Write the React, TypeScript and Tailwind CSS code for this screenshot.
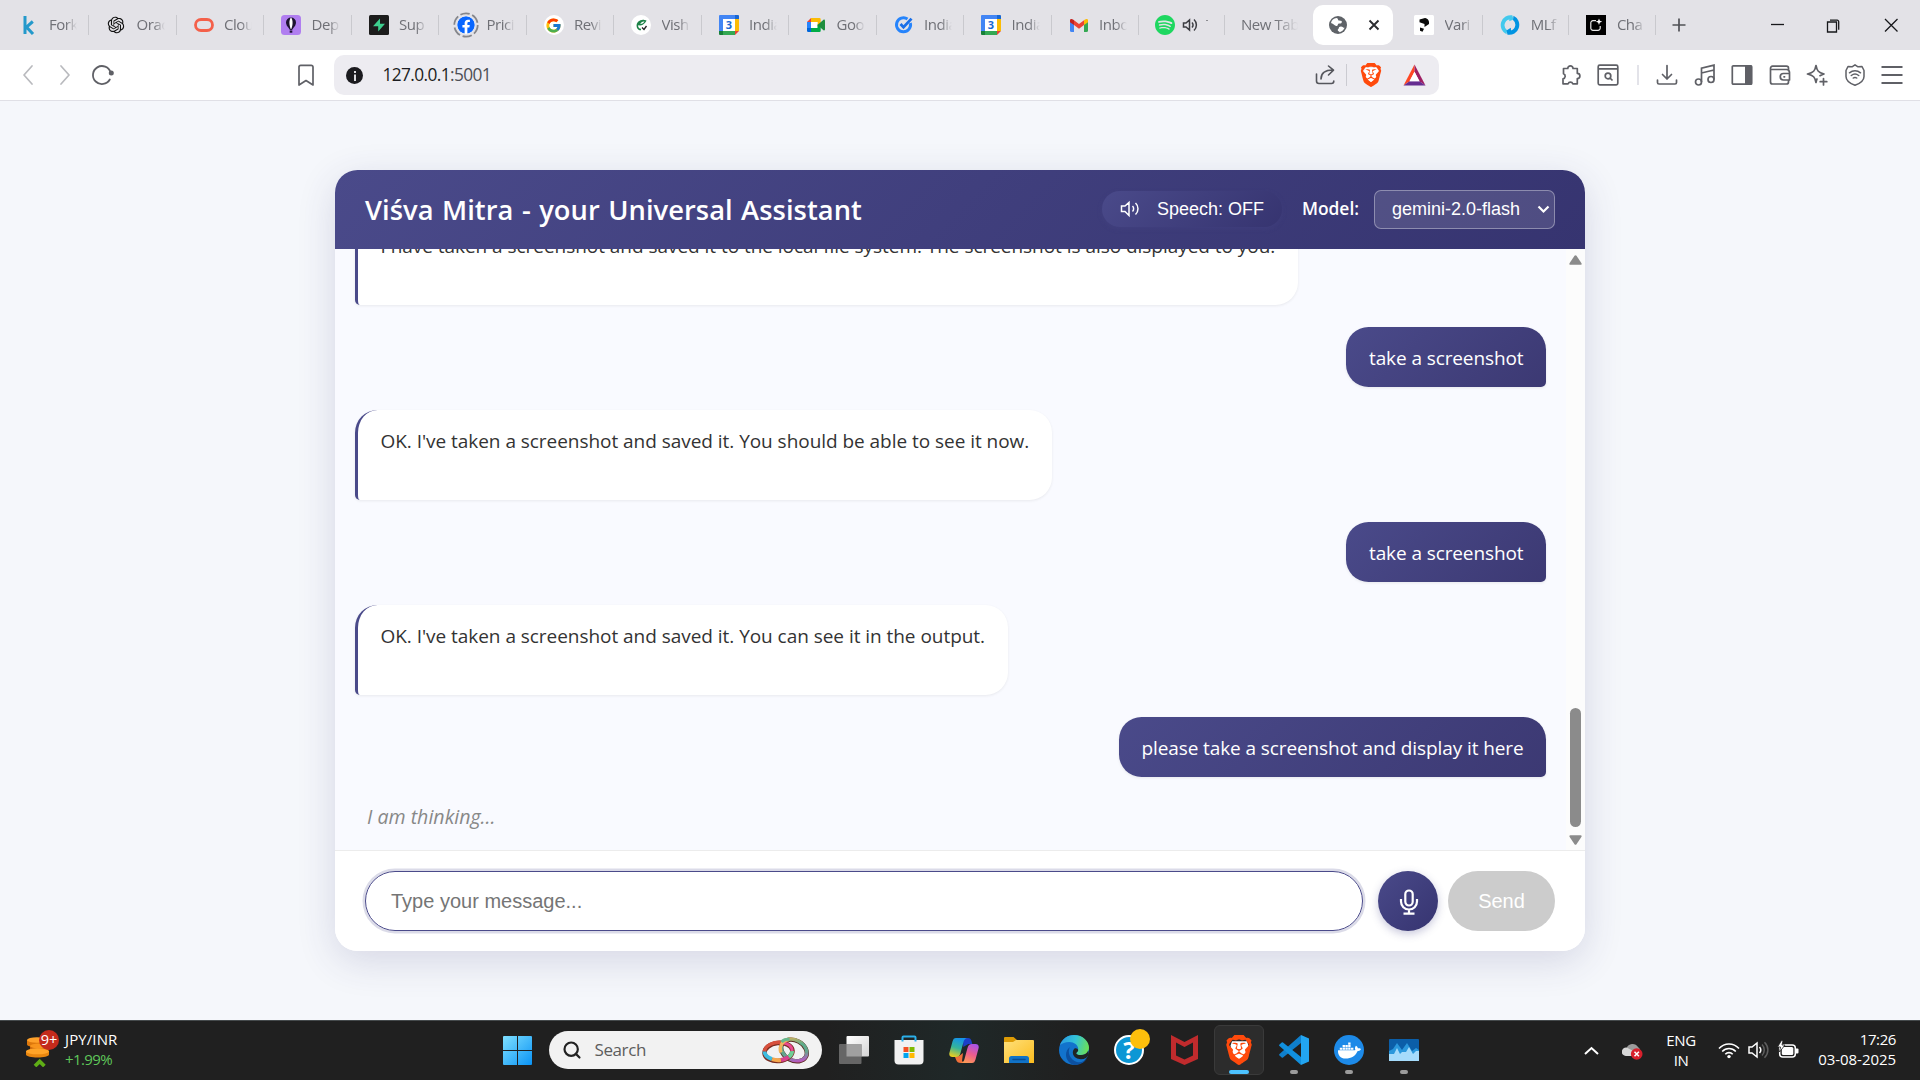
import React from 'react';
import { Search } from 'lucide-react';
import { SiBrave, SiSpotify } from 'react-icons/si';
import { FaDocker, FaFacebook } from 'react-icons/fa';
import { FcGoogle } from 'react-icons/fc';
import { RiOpenaiFill } from 'react-icons/ri';

/* ---------- tab icons ---------- */
const CalendarIcon = () => (
  <svg width="20" height="20" viewBox="0 0 20 20">
    <path d="M1 0h15v4H4v12H0V1a1 1 0 0 1 1-1z" fill="#4285f4" />
    <path d="M16 0h3a1 1 0 0 1 1 1v3h-4z" fill="#1967d2" />
    <path d="M16 4h4v12h-4z" fill="#fbbc04" />
    <path d="M4 16h12v4H4z" fill="#34a853" />
    <path d="M0 16h4v4H1a1 1 0 0 1-1-1z" fill="#188038" />
    <path d="M16 16h4l-4 4z" fill="#ea4335" />
    <path d="M4 4h12v12H4z" fill="#fff" />
    <text x="10" y="14" textAnchor="middle" fontSize="11" fontWeight="700" fill="#1967d2" fontFamily="Open Sans">3</text>
  </svg>
);
const MeetIcon = () => (
  <svg width="20" height="20" viewBox="0 0 20 20">
    <path d="M5 3h8.500a1.200 1.200 0 0 1 1.200 1.200V9l-3.200 2V7H5z" fill="#fbbc04" />
    <path d="M1 7l4-4v4z" fill="#ea4335" />
    <path d="M1 7h4v6H1z" fill="#2684fc" />
    <path d="M1 13h4v4H2.200A1.200 1.200 0 0 1 1 15.800z" fill="#0066da" />
    <path d="M5 7h6.500v6H5z" fill="#fff" />
    <path d="M5 13h6.500V9.500l3.200 1v5.300a1.200 1.200 0 0 1-1.200 1.200H5z" fill="#00ac47" />
    <path d="M11.500 10l6-5.200c.700-.500 1.500-.200 1.500.600v9.200c0 .800-.800 1.100-1.500.600z" fill="#1e8e3e" />
  </svg>
);
const GmailIcon = () => (
  <svg width="20" height="20" viewBox="0 0 20 20">
    <path d="M1 6v9.500A1.500 1.500 0 0 0 2.500 17H5V9z" fill="#4285f4" />
    <path d="M19 6v9.500a1.500 1.500 0 0 1-1.500 1.500H15V9z" fill="#34a853" />
    <path d="M1 5.200v2L5 10V5.300l-1-.8C2.700 3.500 1 4 1 5.200z" fill="#c5221f" />
    <path d="M19 5.200v2L15 10V5.300l1-.8c1.300-1 3-.5 3 .7z" fill="#fbbc04" />
    <path d="M5 5.300l5 3.800 5-3.800V10l-5 3.800L5 10z" fill="#ea4335" />
  </svg>
);
const TasksIcon = () => (
  <svg width="20" height="20" viewBox="0 0 20 20" fill="none" stroke="#2684fc" strokeWidth="3">
    <path d="M13.500 4A7 7 0 1 0 16.300 8" />
    <path d="M6.500 9l3 3.200 8-8.600" stroke="#1a6fe8" strokeWidth="2.800" />
  </svg>
);
const GlobeIcon = () => (
  <svg width="20" height="20" viewBox="0 0 20 20">
    <circle cx="10" cy="10" r="9" fill="#5f6368" />
    <path d="M8.500 3c2 .2 1 2.300 2.500 2.600 1 .3 2-.2 2.700.6.600.8-.2 2-1.200 2.200-1 .1-1.700-.2-2.400.6-.6.900-.2 1.600-1.300 2-1.200.3-2.500-1.300-4.100-2.300L3 8C3.500 5.300 5.700 3.200 8.500 3z" fill="#fff" />
    <path d="M11 12.200c1-.9 3.200-.8 4 .1.500.7 1.200.7 1.700.2-.700 2-2.700 4.200-5.200 4.700-.2-1-1.800-.9-1.800-2.100 0-1 1.300-1 1.300-2.900z" fill="#fff" />
  </svg>
);
const BraveLion = ({ size }: { size: number }) => (
  <span className="grid place-items-center">
    <svg className="col-start-1 row-start-1" width={size * 0.7} height={size * 0.82} viewBox="0 0 14 16">
      <path d="M2 2h10l1 3-2 7-4 3-4-3-2-7z" fill="#fff" />
    </svg>
    <SiBrave className="relative col-start-1 row-start-1 text-[#ff4a0c]" size={size} />
  </span>
);

type Tab = { text: string; icon: React.ReactNode };
const tabs: Tab[] = [
  { text: 'Fork', icon: <svg width="20" height="20" viewBox="0 0 20 20" fill="none" stroke="#2499cb" strokeWidth="3"><path d="M6 1v18M13.800 6.500L7.500 12l6.500 7" /></svg> },
  { text: 'Orac', icon: <RiOpenaiFill size={20} color="#111" /> },
  { text: 'Clou', icon: <svg width="20" height="20" viewBox="0 0 20 20" fill="none"><rect x="1.500" y="4.500" width="17" height="11" rx="5.500" stroke="#f4604a" strokeWidth="2.800" /></svg> },
  { text: 'Depl', icon: <svg width="20" height="20" viewBox="0 0 20 20"><rect width="20" height="20" rx="3.500" fill="#b07ef0" /><circle cx="10" cy="7.500" r="5" fill="#1c1230" /><path d="M5.500 10L9 15h2l3.500-5z" fill="#1c1230" /><path d="M10 2.500c-2.200 2.500-2 8 0 12 2-4 2.200-9.500 0-12z" fill="#fff" /><path d="M8.700 15.500h2.600v2.200H8.700z" fill="#1c1230" /></svg> },
  { text: 'Sup', icon: <svg width="20" height="20" viewBox="0 0 20 20"><rect width="20" height="20" rx="1.500" fill="#1c1c1c" /><path d="M11 3.500v5.300h5L9.200 16.500v-5.300H4z" fill="#3ecf8e" /></svg> },
  { text: 'Prici', icon: <span className="-m-[3px] grid size-[26px] place-items-center"><svg className="col-start-1 row-start-1" width="26" height="26" viewBox="0 0 26 26"><circle cx="13" cy="13" r="11.700" fill="none" stroke="#85868b" strokeWidth="1.800" strokeDasharray="9.500 2.750" /></svg><FaFacebook className="col-start-1 row-start-1 rounded-full bg-white" size={18} color="#0866ff" /></span> },
  { text: 'Revi', icon: <span className="grid size-5 place-items-center rounded-full bg-white"><FcGoogle size={17} /></span> },
  { text: 'Vish', icon: <svg width="20" height="20" viewBox="0 0 20 20"><circle cx="10" cy="10" r="10" fill="#fff" /><path d="M13 5.500C9 5 5.500 8 6.500 12c.5 2 2 2.500 3.500 2.500M8 9.500c2 .5 5-.5 6.500-3.500-2.500-1-5 .5-6.500 3.500z" fill="none" stroke="#1d8348" strokeWidth="1.500" /><path d="M11 12.500l2 2 2.500-3.500" fill="none" stroke="#222" strokeWidth="1.300" /></svg> },
  { text: 'India', icon: <CalendarIcon /> },
  { text: 'Goo', icon: <MeetIcon /> },
  { text: 'India', icon: <TasksIcon /> },
  { text: 'India', icon: <CalendarIcon /> },
  { text: 'Inbo', icon: <GmailIcon /> },
];
const lateTabs: Tab[] = [
  { text: 'Vari', icon: <svg width="20" height="20" viewBox="0 0 20 20"><rect width="20" height="20" rx="1.500" fill="#fff" /><path d="M5.500 4.500L11 3c3 .5 4.500 3 4 6l-4.500 3V9l-5-1.800zM6 12.500l4 1.200-1.500 3-2.500-1z" fill="#0b0b0b" /></svg> },
  { text: 'MLf', icon: <svg width="20" height="20" viewBox="0 0 20 20"><path d="M6.500 19.200A10 10 0 0 1 12.500.300l-.3-.3 1.300 4.500-4.300 1.800.2-1.900a6 6 0 0 0-2.300 10.800z" fill="#43c9ed" /><path d="M13.500.800A10 10 0 0 1 7.500 19.700l-1-4.200 4.300-2.800.2 2.800a6 6 0 0 0 2-10.500z" fill="#0194e2" /></svg> },
  { text: 'Cha', icon: <svg width="20" height="20" viewBox="0 0 20 20"><rect width="20" height="20" fill="#000" /><path d="M10 5.700H7A2.200 2.200 0 0 0 4.800 8v5A2.200 2.200 0 0 0 7 15.300h5a2.200 2.200 0 0 0 2.200-2.300v-2" fill="none" stroke="#e8e8e8" strokeWidth="1.200" /><path d="M13 3.500l.9 2.300 2.300.9-2.300.9-.9 2.300-.9-2.300-2.300-.9 2.300-.9z" fill="#fff" /></svg> },
];

const TabText = ({ children, w = 'w-[28px]' }: { children: string; w?: string }) => (
  <span className={`${w} overflow-hidden whitespace-nowrap pb-[2px] text-[15px] leading-[22px] tracking-[-0.450px] text-[#6f7076] [mask-image:linear-gradient(to_right,#000_60%,transparent)]`}>{children}</span>
);
const TabItem = ({ tab, w }: { tab: Tab; w: string }) => (
  <div className={`${w} flex h-5 shrink-0 items-center border-r border-[#c9c9ce] pl-[17px]`}>
    <span className="mr-[10.5px] grid size-5 shrink-0 place-items-center">{tab.icon}</span>
    <TabText>{tab.text}</TabText>
  </div>
);

const TabStrip = () => (
  <div className="flex h-[50px] items-center bg-[#e3e2e7] pl-[1.5px]">
    {tabs.map((t, i) => <TabItem key={i} tab={t} w="w-[87.500px]" />)}
    <div className="flex h-5 w-[86px] shrink-0 items-center border-r border-[#c9c9ce] pl-[15.500px]">
      <SiSpotify size={20} color="#1ed760" className="shrink-0" />
      <svg className="ml-[7px]" width="16" height="16" viewBox="0 0 16 16" fill="none" stroke="#3c3d42" strokeWidth="1.500"><path d="M1.500 6v4h2.500l3.500 3V3L4 6zM10 5.500a3.500 3.500 0 0 1 0 5M12 2.500a7.500 7.500 0 0 1 0 11" /></svg>
      <span className="ml-[8px] w-[2px] overflow-hidden pb-[2px] text-[15px] leading-5 text-[#8c8d92]">T</span>
    </div>
    <div className="w-[88px] shrink-0 pl-[16px]"><TabText w="block w-[57px]">New Tab</TabText></div>
    <div className="flex h-10 w-[80px] shrink-0 items-center gap-[18px] rounded-[10px] bg-white pl-[15px]">
      <GlobeIcon />
      <svg width="16" height="16" viewBox="0 0 16 16" stroke="#2b2c30" strokeWidth="1.900"><path d="M3.500 3.500l9 9M12.500 3.500l-9 9" /></svg>
    </div>
    <div className="ml-[4px] flex">
      {lateTabs.map((t, i) => <TabItem key={i} tab={t} w="w-[86.200px]" />)}
    </div>
    <svg className="ml-[15px]" width="16" height="16" viewBox="0 0 16 16" stroke="#505156" strokeWidth="1.700"><path d="M8 1.500v13M1.500 8h13" /></svg>
    <div className="ml-auto flex">
      {['M3 7.500h13', 'M2.500 5h9v10h-9zM5 3.200h7.200a1.500 1.500 0 0 1 1.500 1.500v8', 'M2 2l12.500 12.500M14.500 2L2 14.500'].map((d) => (
        <div key={d} className="grid w-[57.500px] place-items-center"><svg width="17" height="17" viewBox="0 0 17 17" fill="none" stroke="#17181b" strokeWidth="1.300"><path d={d} /></svg></div>
      ))}
    </div>
  </div>
);

const Cell = ({ children }: { children: React.ReactNode }) => <div className="grid h-full w-[37.500px] shrink-0 place-items-center">{children}</div>;
const Line = ({ d, c = '#5f6066', w = 1.7 }: { d: string; c?: string; w?: number }) => (
  <svg width="22" height="22" viewBox="0 0 22 22" fill="none" stroke={c} strokeWidth={w} strokeLinejoin="round" strokeLinecap="round"><path d={d} /></svg>
);

const Toolbar = () => (
  <div className="flex h-[51px] items-center border-b border-[#e0e0e6] bg-white px-[9px]">
    <Cell><Line d="M15 2L7 11l8 9" c="#b9babe" /></Cell>
    <Cell><Line d="M7 2l8 9-8 9" c="#b9babe" /></Cell>
    <Cell>
      <svg width="24" height="22" viewBox="0 0 24 22" fill="none" stroke="#5f6066" strokeWidth="1.800"><path d="M18.800 15.500A9 9 0 1 1 19.600 8.500" strokeLinecap="round" /><circle cx="20.300" cy="9" r="2.500" fill="#5f6066" stroke="none" /></svg>
    </Cell>
    <div className="w-[166px]" />
    <Cell><Line d="M4 3a1.700 1.700 0 0 1 1.700-1.700h10.600A1.700 1.700 0 0 1 18 3v18L11 16.500 4 21z" /></Cell>
    <div className="ml-[9px] flex h-10 w-[1105px] items-center rounded-[10px] bg-[#edecf1] pl-[12px] pr-[13px]">
      <span className="mt-[1px] grid size-[17px] place-items-center rounded-full bg-[#1b1b1f]"><svg width="4" height="10" viewBox="0 0 4 10" fill="#dcdce0"><path d="M1 0h2v2H1zM1 3.500h2V10H1z" /></svg></span>
      <span className="ml-[19.500px] text-[17.300px] tracking-[-0.600px] text-[#1c1d22]">127.0.0.1<span className="text-[#4e4f55]">:5001</span></span>
      <span className="ml-auto"><Line d="M2.500 10v7A2.500 2.500 0 0 0 5 19.500h12.500c1.500 0 2.300-.8 2.300-2.500M7 15c0-5 3.500-9 12-9M14.500 2l5 4.200-5 4.800" c="#55565c" w={1.600} /></span>
      <span className="ml-[10px] h-[22px] w-px bg-[#cbcbd1]" />
      <span className="ml-[12px]"><BraveLion size={24} /></span>
      <svg className="ml-[20px]" width="23" height="22" viewBox="0 0 23 21" preserveAspectRatio="none"><path d="M11.500.500L.500 20.500l6-4 5-9z" fill="#ff4724" /><path d="M11.500.500v7l5 9 6 4z" fill="#9e1f63" /><path d="M.500 20.500h22l-6-4h-10z" fill="#662d91" /><path d="M11.500 7.500l-5 9h10z" fill="#fff" /></svg>
    </div>
    <div className="ml-auto flex h-full">
      <Cell><Line d="M3.500 4.500h4.300a2.600 2.600 0 1 1 5.200 0h4.300v4.800a2.600 2.600 0 1 1 0 5.200v5.300h-4.500a2.500 2.500 0 0 0-4.700 0H3v-5a2.600 2.600 0 0 0 .5-5z" /></Cell>
      <Cell><svg className="-ml-[2px]" width="22" height="22" viewBox="0 0 22 22" fill="none" stroke="#5f6066" strokeWidth="1.700"><rect x="1.200" y="1.200" width="19.600" height="19.600" rx="1.500" /><path d="M1 4.800h20M13 14l2.500 2.500" /><circle cx="11" cy="12" r="2.800" /></svg></Cell>
      <div className="grid w-[21px] place-items-center"><span className="h-5 w-[2px] bg-[#e3e3e9]" /></div>
      <Cell><Line d="M11 1.500V15M6.500 10.500L11 15l4.500-4.500M1.500 16v2.500A1.500 1.500 0 0 0 3 20h16a1.500 1.500 0 0 0 1.500-1.500V16" /></Cell>
      <Cell><svg width="22" height="22" viewBox="0 0 22 22" fill="none" stroke="#5f6066" strokeWidth="1.700"><circle cx="4.500" cy="18" r="3" /><circle cx="17" cy="15.500" r="3" /><path d="M7.500 18V4.200l12.500-3V15.500M7.500 9l12.500-3" /></svg></Cell>
      <Cell><svg width="22" height="22" viewBox="0 0 22 22"><rect x="1.300" y="1.800" width="19.400" height="18.400" rx="1" fill="none" stroke="#5f6066" strokeWidth="1.700" /><path d="M14 1.500h7v19h-7z" fill="#5f6066" /></svg></Cell>
      <Cell><Line d="M19.500 6.500V4.200a2 2 0 0 0-2-2H3.500a2 2 0 0 0-2 2v13.800a2 2 0 0 0 2 2h14a2 2 0 0 0 2-2V16M2 5.500h15.500a3 3 0 0 1 3 3v7.500h-6a3.200 3.200 0 0 1 0-6.500h6M15 12.800h.6" /></Cell>
      <Cell><Line d="M10 1.500c1 5.500 2.500 7 8 8.500-1.500.5-3 1-4 1.700M10 1.500C9 7 7.500 8.500 1.500 10c6 1.500 7.500 3 8.500 8.500.3-1.400.6-2.500 1-3.500M17.500 14.500v6.500M14.200 17.700h6.600" /></Cell>
      <Cell><Line w={1.500} d="M11 .8l3 2 4-.3 2 4v6c0 4-4 7-9 8.800-5-1.800-9-4.800-9-8.800v-6l2-4 4 .3zM5.500 8.800c3.200-2.600 7.800-2.600 11 0M7.300 11.500c2.200-1.700 5.200-1.700 7.400 0M9.300 14c1-.7 2.400-.7 3.400 0" /></Cell>
      <Cell><svg width="22" height="20" viewBox="0 0 22 20" stroke="#5f6066" strokeWidth="1.800"><path d="M.500 2h21M.500 10h21M.500 18h21" /></svg></Cell>
    </div>
  </div>
);

/* ---------- chat card ---------- */
const Bot = ({ children }: { children: string }) => (
  <div className="h-[90px] shrink-0 self-start whitespace-nowrap rounded-[22.500px] rounded-bl-[5px] border-l-[3px] border-[#4a4a8a] bg-white pl-[22.500px] pr-[22.500px] pt-[16px] text-[19px] leading-[30px] tracking-[-0.040px] text-[#333] shadow-[0_1px_3px_rgba(0,0,0,0.07)]">{children}</div>
);
const User = ({ children }: { children: string }) => (
  <div className="-mt-px mb-px h-[60px] shrink-0 self-end whitespace-nowrap rounded-[22.500px] rounded-br-[5px] bg-linear-135 from-[#4a4a8a] to-[#3c3973] px-[22.500px] pt-[16px] text-[19px] leading-[30px] tracking-[-0.100px] text-white shadow-[0_1px_3px_rgba(0,0,0,0.08)]">{children}</div>
);

const ChatCard = () => (
  <div className="flex h-[781px] w-[1250px] flex-col overflow-hidden rounded-[22.500px] bg-white shadow-[0_10px_38px_rgba(50,50,110,0.16)]">
    <header className="flex h-[79px] shrink-0 items-center bg-linear-135 from-[#4a4a8a] to-[#363470] px-[30px] text-white">
      <h1 className="pt-[2px] text-[27.300px] font-semibold tracking-[0.050px] [word-spacing:1.300px]">Viśva Mitra - your Universal Assistant</h1>
      <div className="ml-auto flex items-center">
        <button className="mb-[1px] flex h-9 w-[180px] items-center rounded-full bg-linear-135 from-[#4a4a8a] to-[#363470] pl-[18px] font-['Liberation_Sans',Arial,sans-serif] text-[18px] shadow-[0_2px_5px_rgba(74,74,138,0.25)]">
          <svg width="20" height="18" viewBox="0 0 20 18" fill="none" stroke="#fff" strokeWidth="1.500"><path d="M1.500 6v5.500H5L9 15.500v-13L5 6zM12.500 6c1.500 1.500 1.500 4 0 5.500M15.500 3c3.300 3 3.300 8.500 0 11.500" /></svg>
          <span className="ml-[17px]">Speech: OFF</span>
        </button>
        <span className="mb-[2px] ml-[20px] text-[17.400px] font-semibold">Model:</span>
        <div className="ml-[15px] flex h-[39px] w-[181px] items-center rounded-[7px] border border-white/35 bg-white/12 pl-[17px] font-['Liberation_Sans',Arial,sans-serif] text-[18px]">
          gemini-2.0-flash
          <svg className="ml-auto mr-[4px]" width="13" height="9" viewBox="0 0 13 9" fill="none" stroke="#fff" strokeWidth="2.200"><path d="M1.500 1.500l5 5 5-5" /></svg>
        </div>
      </div>
    </header>
    <div className="flex h-[601px] shrink-0 overflow-hidden bg-[#f9faff]">
      <div className="-mt-[34px] flex flex-1 flex-col gap-[22.500px] px-5">
        <Bot>I have taken a screenshot and saved it to the local file system. The screenshot is also displayed to you.</Bot>
        <User>take a screenshot</User>
        <Bot>OK. I've taken a screenshot and saved it. You should be able to see it now.</Bot>
        <User>take a screenshot</User>
        <Bot>OK. I've taken a screenshot and saved it. You can see it in the output.</Bot>
        <User>please take a screenshot and display it here</User>
        <p className="pl-[12px] pt-[1.500px] text-[19.600px] italic leading-[30px] text-[#888]">I am thinking...</p>
      </div>
      <div className="flex w-[19px] flex-col items-center bg-[#fcfcfc]">
        <svg className="mt-[6px]" width="13" height="10" viewBox="0 0 13 10" fill="#8b8b8b"><path d="M5.500.800q1-1.200 2 0l5 7.400q.5 1.600-1 1.600H1.500Q0 9.800.500 8.200z" /></svg>
        <div className="mt-[443px] h-[119px] w-[11px] rounded-full bg-[#8b8b8b]" />
        <svg className="mt-[8px]" width="13" height="10" viewBox="0 0 13 10" fill="#8b8b8b"><path d="M5.500 9.200q1 1.200 2 0l5-7.400Q13 .200 11.500.200h-10Q0 .200.500 1.800z" /></svg>
      </div>
    </div>
    <footer className="flex flex-1 items-center border-t border-[#ececec] bg-white px-[30px] font-['Liberation_Sans',Arial,sans-serif] text-[20px]">
      <div className="flex h-[60px] w-[998px] items-center rounded-full border border-[#4a4a8a] pl-[25px] text-[#757575] shadow-[0_0_0_2.500px_rgba(74,74,138,0.2)]">Type your message...</div>
      <button className="ml-[15px] grid size-[60px] place-items-center rounded-full bg-linear-135 from-[#4a4a8a] to-[#363470] shadow-[0_3px_8px_rgba(74,74,138,0.3)]">
        <svg className="ml-[1px] mt-[1px]" width="20" height="26" viewBox="0 0 20 26" fill="none" stroke="#fff" strokeWidth="2.200"><rect x="6.300" y="1.500" width="7.400" height="15" rx="3.700" /><path d="M2 10v2.500a8 8 0 0 0 16 0V10M10 20.500v4M4.500 24.700h11" /></svg>
      </button>
      <button className="ml-[10px] h-[60px] w-[107px] rounded-full bg-[#ccc] text-white">Send</button>
    </footer>
  </div>
);

/* ---------- taskbar ---------- */
const AppIcon = ({ children, dot = false }: { children: React.ReactNode; dot?: boolean }) => (
  <div className="relative grid size-[50px] place-items-center">
    {children}
    {dot && <span className="absolute bottom-[1px] left-[21px] h-[4px] w-[8px] rounded-full bg-[#9b9b9b]" />}
  </div>
);

const Taskbar = () => (
  <div className="flex h-[60px] items-center border-t border-[#454a4c] bg-[linear-gradient(90deg,#202020_43%,#1f2828_50%,#202020_56%)] pb-[1px] text-[15px] leading-5 text-white">
    <div className="flex w-[503px] items-center pl-[25px]">
      <svg className="-mt-[5px]" width="35" height="38" viewBox="0 0 35 38">
        <path d="M2 11v4.500c0 3.500 20 3.500 20 0V11z" fill="#dd780c" /><ellipse cx="12" cy="11" rx="10" ry="2.800" fill="#ffa12a" />
        <path d="M5 17v3.500c0 3.500 19 3.500 19 0V17z" fill="#c9660a" /><ellipse cx="14.500" cy="17" rx="9.500" ry="2.600" fill="#f8941c" />
        <path d="M1 22v3.500c0 4 23 4 23 0V22z" fill="#e8860f" /><ellipse cx="12.500" cy="22.300" rx="11.500" ry="3" fill="#ffa428" />
        <path d="M10 37l4.700-4.500 4.700 4.500" fill="none" stroke="#5fae16" strokeWidth="3.800" />
        <circle cx="24" cy="11" r="10" fill="#c42b1c" />
        <text x="24" y="16" textAnchor="middle" fontSize="14.500" fill="#fff" fontFamily="Open Sans">9+</text>
      </svg>
      <div className="-mt-[3px] ml-[5px] tracking-[0.100px]"><div>JPY/INR</div><div className="tracking-[-0.600px] text-[#5fc75a]">+1.99%</div></div>
    </div>
    <svg width="29" height="29" viewBox="0 0 29 29"><defs><linearGradient id="win" x1="0" y1="0" x2="1" y2="1"><stop offset="0" stopColor="#7fe0ff" /><stop offset="1" stopColor="#0a93f5" /></linearGradient></defs><path d="M0 1a1 1 0 0 1 1-1h13v14H0zM15 0h13a1 1 0 0 1 1 1v13H15zM0 15h14v14H1a1 1 0 0 1-1-1zM15 15h14v13a1 1 0 0 1-1 1H15z" fill="url(#win)" /></svg>
    <div className="ml-[17px] flex h-[38px] w-[273px] items-center rounded-full bg-[#f2f2f2] pl-[13px] pr-[12px]">
      <Search size={20} color="#222" strokeWidth={2.600} />
      <span className="ml-[12.500px] text-[17px] tracking-[-0.400px] text-[#5d5d5d]">Search</span>
      <svg className="ml-auto" width="48" height="27" viewBox="0 0 48 27" fill="none">
        <defs>
          <linearGradient id="ring" x1="0" y1="0" x2="1" y2="1"><stop offset="0" stopColor="#f5b04d" /><stop offset=".35" stopColor="#5fae8b" /><stop offset=".6" stopColor="#63a58c" /><stop offset=".85" stopColor="#b05fc0" /><stop offset="1" stopColor="#d8438f" /></linearGradient>
        </defs>
        <ellipse cx="32" cy="13.500" rx="13.500" ry="10" stroke="#5a2c20" strokeWidth="4.400" transform="rotate(28 32 13.500)" />
        <ellipse cx="32" cy="13" rx="13.500" ry="10" stroke="url(#ring)" strokeWidth="3.400" transform="rotate(28 32 13)" />
        <ellipse cx="16.500" cy="15" rx="14" ry="9" stroke="#7a2c20" strokeWidth="4.600" transform="rotate(-6 16 15)" />
        <path d="M2.500 14.500C3 8 12 4.500 20 5.500" stroke="#d8503c" strokeWidth="3.400" />
        <path d="M20 5.500c6 .8 10.500 4 10 9" stroke="#e8498f" strokeWidth="3" />
        <path d="M2.500 14.500c0 3 3 6 7.500 7.700" stroke="#3dbde0" strokeWidth="4" />
        <path d="M10 22.200c3 1 6 1.200 9 .8" stroke="#f5a84d" strokeWidth="4" />
        <path d="M19 23c3-.5 6-1.600 7.800-3" stroke="#d8438f" strokeWidth="4" />
        <path d="M26.800 20c2-1.600 3.300-3.500 3.200-5.800" stroke="#6fcf97" strokeWidth="4" />
        <path d="M19 15.500c-2.500-6 2-12.500 8-13" stroke="#efb45c" strokeWidth="3.400" />
        <path d="M19.500 5c1.800-2 4.500-3 8-2.700" stroke="#67b78c" strokeWidth="3.200" />
      </svg>
    </div>
    <div className="ml-[7px] flex gap-[5px]">
      <AppIcon><svg width="30" height="28" viewBox="0 0 30 28"><defs><linearGradient id="tv" x1="0" y1="0" x2="1" y2="1"><stop offset="0" stopColor="#fff" /><stop offset="1" stopColor="#d4d4d4" /></linearGradient></defs><rect x="7.500" width="22.500" height="20.500" rx="1" fill="url(#tv)" /><rect y="8" width="22.500" height="20" rx="1" fill="#666" /><path d="M7.500 8h15v12.500h-15z" fill="#a0a0a0" /></svg></AppIcon>
      <AppIcon><svg width="30" height="30" viewBox="0 0 30 30"><path d="M.500 5h29v20.500a4 4 0 0 1-4 4h-21a4 4 0 0 1-4-4z" fill="#f1f1f1" /><path d="M8.500 6.500V2.500A1 1 0 0 1 9.500 1.500h11a1 1 0 0 1 1 1v4" fill="none" stroke="#2bb0ea" strokeWidth="2" /><path d="M9.500 12h5v5h-5z" fill="#f25022" /><path d="M15.500 12h5v5h-5z" fill="#7fba00" /><path d="M9.500 18h5v5h-5z" fill="#00a4ef" /><path d="M15.500 18h5v5h-5z" fill="#ffb900" /></svg></AppIcon>
      <AppIcon>
        <svg width="30" height="27" viewBox="0 0 30 27"><defs><linearGradient id="c1" x1=".5" y1="0" x2=".2" y2="1"><stop offset="0" stopColor="#1593e8" /><stop offset=".5" stopColor="#35b59a" /><stop offset="1" stopColor="#f3cf1a" /></linearGradient><linearGradient id="c2" x1=".7" y1="0" x2=".3" y2="1"><stop offset="0" stopColor="#a853e8" /><stop offset=".5" stopColor="#ee5c8e" /><stop offset="1" stopColor="#fd9a55" /></linearGradient></defs>
          <path d="M14 1h5c2 0 3 1 3.500 3l.8 3h-4l-5 3z" fill="#1b3fc8" /><path d="M6 20l4-1 4-3-1 8 2 2h-3c-3 0-4-1-4.800-3z" fill="#f0703a" />
          <path d="M7 1h11c-2 .5-3 2-3.500 4l-3 11c-.7 2.500-2 4-4.500 4H3.500c-2.500 0-3.800-2-3-4.500l3-11C4.300 2 5 1 7 1z" fill="url(#c1)" />
          <path d="M23 26H12c2-.5 3-2 3.500-4l3-11c.7-2.500 2-4 4.500-4h3.500c2.500 0 3.800 2 3 4.500l-3 11C25.700 25 25 26 23 26z" fill="url(#c2)" /></svg>
      </AppIcon>
      <AppIcon><svg width="30" height="28" viewBox="0 0 30 28"><defs><linearGradient id="fo" x1="0" y1="0" x2="1" y2="1"><stop offset="0" stopColor="#ffe07a" /><stop offset="1" stopColor="#fbbc1e" /></linearGradient></defs><path d="M0 2a1 1 0 0 1 1-1h8.500l3.500 3v4H0z" fill="#dd9b05" /><path d="M0 6h9l3-2h17a1 1 0 0 1 1 1v22H0z" fill="url(#fo)" /><path d="M5 27v-4.500a2.500 2.500 0 0 1 2.500-2.500h15a2.500 2.500 0 0 1 2.500 2.500V27z" fill="#1173c7" /><path d="M9 23.500h12" stroke="#0a4c92" strokeWidth="1.500" strokeLinecap="round" /></svg></AppIcon>
      <AppIcon>
        <svg width="30" height="30" viewBox="0 0 30 30"><defs><linearGradient id="e1" x1="0" y1=".3" x2="1" y2=".5"><stop offset="0" stopColor="#2a9be2" /><stop offset=".5" stopColor="#33c3d8" /><stop offset="1" stopColor="#6bdf58" /></linearGradient></defs>
          <circle cx="15" cy="15" r="15" fill="#1273cc" />
          <path d="M1 10C3 4 8.500 0 15 0c9 0 15 6.500 15 12.500 0 5-4 7.500-8 7.500-3.500 0-4.800-1-4.800-1.800 0-.8 2-1.600 2-4.200 0-4-4-7-9-7-4 0-7.500 1.500-9.200 3z" fill="url(#e1)" />
          <path d="M11 12c-3 5 0 13 7 15 4 1 8-1 10-4-3 5.500-8 7-13 7-4-1-8-5-8-10 0-3.500 1.500-6.500 4-8z" fill="#0c50a0" />
          <path d="M17.200 18.200c0 .8 1.300 1.800 4.800 1.800 3 0 6-1.300 7.300-4.500L30 20l-3 3c-5 2.500-11.500 1-13-4-.6-2.500.3-4.500 1.500-5.500 1.500-.8 3.700.3 3.700 1.700 0 1.500-2 2.200-2 3z" fill="#202424" /></svg>
      </AppIcon>
      <AppIcon>
        <svg className="-mr-[6px] -mt-[6px]" width="36" height="36" viewBox="0 0 36 36"><circle cx="15" cy="21" r="14" fill="#0c97d5" stroke="#fff" strokeWidth="2" /><text x="15" y="29.500" textAnchor="middle" fontSize="24" fontWeight="700" fill="#fff" fontFamily="Open Sans">?</text><circle cx="26" cy="10" r="10" fill="#fdbf0c" /></svg>
      </AppIcon>
      <AppIcon><svg width="27" height="30" viewBox="0 0 27 30"><path d="M0 0l13.500 7L27 0v24l-13.500 6L0 24zM5 7.500v13l8.500 4 8.500-4v-13L13.500 12z" fill="#c02b2d" fillRule="evenodd" /></svg></AppIcon>
      <div className="relative grid size-[50px] place-items-center rounded-[6px] border border-[#3a3a3a] bg-[#2c2c2c]">
        <BraveLion size={30} />
        <span className="absolute bottom-0 left-[14px] h-[4px] w-[20px] rounded-full bg-[#4cc2ff]" />
      </div>
      <AppIcon dot><svg width="30" height="30" viewBox="0 0 30 30"><path d="M22 0l8 3.500v23L22 30V0z" fill="#22a5f1" /><path d="M22 8L4 22.500a1 1 0 0 1-1.300 0L.500 20.500a1 1 0 0 1 0-1.500L22 0z" fill="#0f7fcc" /><path d="M22 22L4 7.500a1 1 0 0 0-1.300 0L.500 9.500a1 1 0 0 0 0 1.500L22 30z" fill="#1190de" /></svg></AppIcon>
      <AppIcon dot><span className="grid size-[30px] place-items-center rounded-full bg-[#1d8ae8]"><FaDocker size={23} color="#fff" /></span></AppIcon>
      <AppIcon dot><svg width="30" height="22" viewBox="0 0 30 22"><rect width="30" height="22" rx="1" fill="#0b5ea8" /><path d="M0 12l4-2 4-6 5 7 5-7 5 8 4-3 3 2v10H0z" fill="#2b98dc" /><path d="M0 15h5l3-6 3 6 2-2 4 0 3-5 4 7 3-3h3v10H0z" fill="#a6dcfb" /></svg></AppIcon>
    </div>
    <div className="ml-auto flex items-center pr-[24px]">
      <svg className="mr-px" width="15" height="9" viewBox="0 0 15 9" fill="none" stroke="#fff" strokeWidth="2"><path d="M1 8l6.500-6L14 8" /></svg>
      <svg className="ml-[22px] mt-[3px]" width="21" height="17" viewBox="0 0 21 17"><path d="M5 12.500a4 4 0 0 1-.5-7.500A6.500 6.500 0 0 1 16 4a4 4 0 0 1 2 4l-8 5z" fill="#9b9b9b" /><path d="M4.500 13a4.200 4.200 0 1 1 2-7.500L13 9l-1 4z" fill="#d7d7d7" /><circle cx="14.700" cy="11" r="5.800" fill="#d9202c" /><path d="M12.500 8.800l4.400 4.400M16.900 8.800l-4.400 4.400" stroke="#fff" strokeWidth="1.500" /></svg>
      <div className="-mt-[1px] ml-[23px] w-[30px] text-center tracking-[-0.400px]"><div>ENG</div><div>IN</div></div>
      <svg className="ml-[22px]" width="22" height="17" viewBox="0 0 22 17" fill="none" stroke="#fff" strokeWidth="1.600"><path d="M1 6.500c5.500-6 14.500-6 20 0M4.200 9.500c3.800-4 9.800-4 13.600 0M7.300 12.300c2-2.200 5.400-2.200 7.400 0" /><circle cx="11" cy="14.600" r="1.700" fill="#fff" stroke="none" /></svg>
      <svg className="ml-[8px]" width="21" height="18" viewBox="0 0 21 18" fill="none" stroke="#fff" strokeWidth="1.500"><path d="M1 6v6h3l5 4V2L4 6zM11.500 6c1.500 1.700 1.500 4.300 0 6" /><path d="M14 3.500c3 3 3 8 0 11M16.500 1.200c4.500 4.500 4.500 11 0 15.600" stroke="#5e5e5e" /></svg>
      <svg className="-mt-[3px] ml-[8px]" width="22" height="18" viewBox="0 0 22 18"><rect x="2.700" y="5" width="15.600" height="12" rx="3" fill="none" stroke="#fff" strokeWidth="1.500" /><rect x="4.800" y="7" width="11.500" height="8" rx="1.500" fill="#fff" /><path d="M19 8.500h1.500a1 1 0 0 1 1 1v3a1 1 0 0 1-1 1H19z" fill="#fff" /><path d="M4.500.500L.500 7h3l-1 5 5.500-7H5L6 .500z" fill="#fff" stroke="#202020" strokeWidth=".8" /></svg>
      <div className="-mt-[3px] ml-[18px] w-[79px] text-right tracking-[-0.050px]"><div className="tracking-[-0.400px]">17:26</div><div>03-08-2025</div></div>
    </div>
  </div>
);

export default function App() {
  return (
    <div className="flex h-[1080px] w-[1920px] flex-col overflow-hidden bg-[#f5f7fb] font-['Open_Sans','Noto_Sans',sans-serif]">
      <TabStrip />
      <Toolbar />
      <main className="flex flex-1 items-start justify-center pt-[69px]">
        <ChatCard />
      </main>
      <Taskbar />
    </div>
  );
}
